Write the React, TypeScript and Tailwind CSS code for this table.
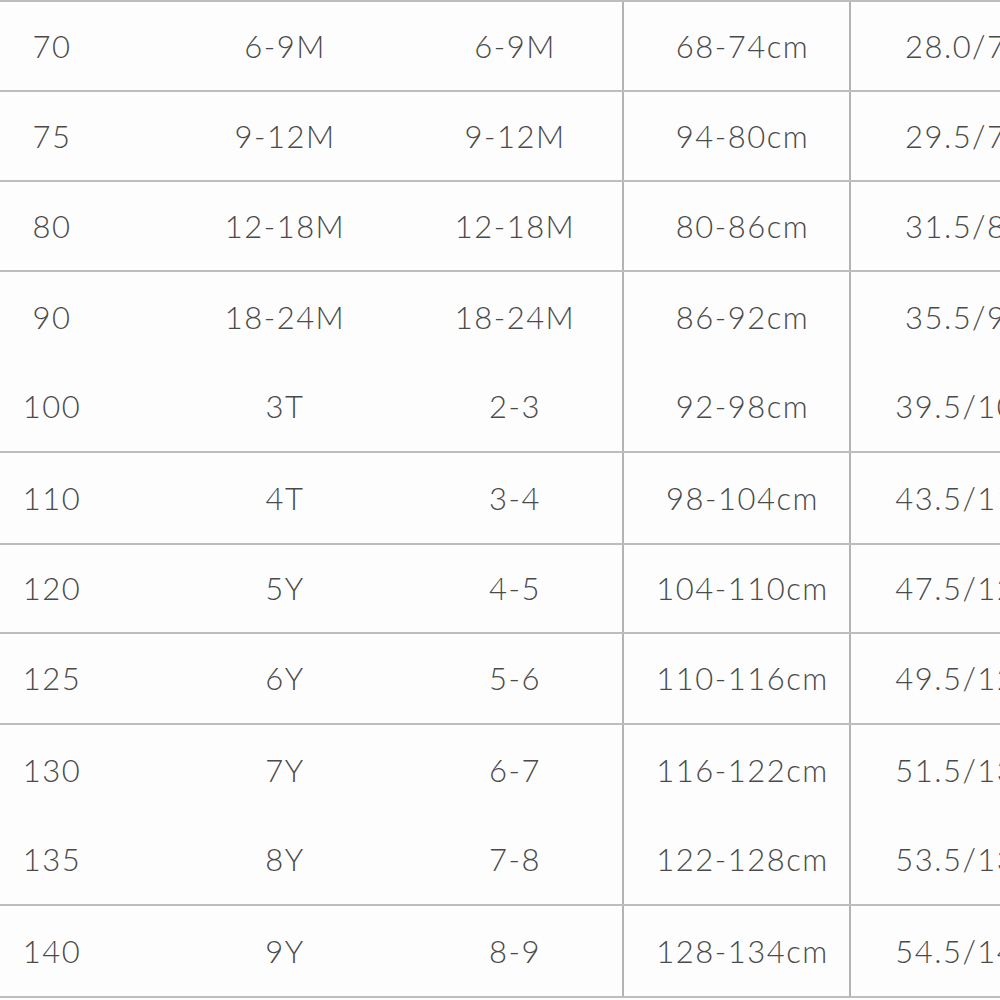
import React from "react";

type Row = { a: string; b: string; c: string; d: string; e: string };

const groups: { h: string; rows: Row[] }[] = [
  { h: "h-[90px]", rows: [{ a: "70", b: "6-9M", c: "6-9M", d: "68-74cm", e: "28.0/71" }] },
  { h: "h-[90px]", rows: [{ a: "75", b: "9-12M", c: "9-12M", d: "94-80cm", e: "29.5/75" }] },
  { h: "h-[90px]", rows: [{ a: "80", b: "12-18M", c: "12-18M", d: "80-86cm", e: "31.5/80" }] },
  {
    h: "h-[181px]",
    rows: [
      { a: "90", b: "18-24M", c: "18-24M", d: "86-92cm", e: "35.5/90" },
      { a: "100", b: "3T", c: "2-3", d: "92-98cm", e: "39.5/100" },
    ],
  },
  { h: "h-[92px]", rows: [{ a: "110", b: "4T", c: "3-4", d: "98-104cm", e: "43.5/110" }] },
  { h: "h-[89px]", rows: [{ a: "120", b: "5Y", c: "4-5", d: "104-110cm", e: "47.5/120" }] },
  { h: "h-[91px]", rows: [{ a: "125", b: "6Y", c: "5-6", d: "110-116cm", e: "49.5/125" }] },
  {
    h: "h-[181px]",
    rows: [
      { a: "130", b: "7Y", c: "6-7", d: "116-122cm", e: "51.5/130" },
      { a: "135", b: "8Y", c: "7-8", d: "122-128cm", e: "53.5/135" },
    ],
  },
  { h: "h-[92px]", rows: [{ a: "140", b: "9Y", c: "8-9", d: "128-134cm", e: "54.5/140" }] },
];

function DataRow({ r }: { r: Row }) {
  return (
    <div className="flex-1 grid grid-cols-[104px_362px_98px_58px_227px_251px] whitespace-nowrap">
      <div className="flex items-center justify-center">{r.a}</div>
      <div className="flex items-center justify-center">{r.b}</div>
      <div className="flex items-center justify-center">{r.c}</div>
      <div />
      <div className="flex items-center justify-center pl-3 border-l-2 border-[#b3b3b3]">{r.d}</div>
      <div className="flex items-center justify-center pr-5 border-l-2 border-[#b3b3b3]">{r.e}</div>
    </div>
  );
}

export default function App() {
  return (
    <div
      className="w-[1000px] h-[1000px] overflow-hidden bg-[#fdfdfd] text-[#4a4a4a]"
      style={{ fontFamily: "Lato, 'Open Sans', sans-serif" }}
    >
      <div className="w-[1100px] h-[2px] bg-[#bdbdbd]" />
      <div className="w-[1100px] flex flex-col text-[31px] font-light tracking-[1.5px]">
        {groups.map((g, i) => (
          <div key={i} className={"flex flex-col border-b-2 border-[#bdbdbd] " + g.h}>
            {g.rows.map((r, j) => (
              <DataRow key={j} r={r} />
            ))}
          </div>
        ))}
      </div>
    </div>
  );
}
